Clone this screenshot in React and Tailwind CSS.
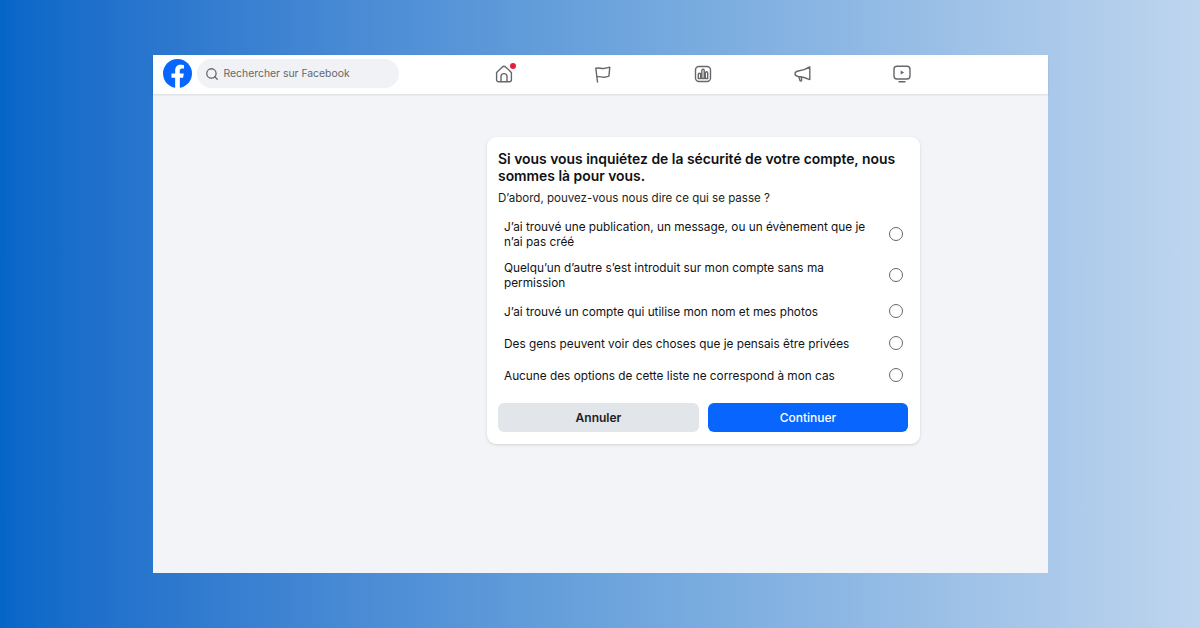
import React from "react";
import { Search } from "lucide-react";

const options = [
    { label: "J’ai trouvé une publication, un message, ou un évènement que je n’ai pas créé", tall: true },
    { label: "Quelqu’un d’autre s’est introduit sur mon compte sans ma permission", tall: true },
    { label: "J’ai trouvé un compte qui utilise mon nom et mes photos" },
    { label: "Des gens peuvent voir des choses que je pensais être privées" },
    { label: "Aucune des options de cette liste ne correspond à mon cas" },
];

const FbLogo = () => (
    <svg viewBox="0 0 36 36" className="w-[29px] h-[29px] shrink-0">
        <circle cx="18" cy="18" r="18" fill="#0866ff" />
        <path
            fill="#fff"
            d="M25 23.2l.8-5.2h-5V14.7c0-1.5.7-2.9 3-2.9h2.3V7.4s-2.1-.4-4.1-.4c-4.2 0-6.9 2.5-6.9 7.1V18h-4.600v5.200h4.600V36h5.800V23.200z"
        />
    </svg>
);

const HomeIcon = () => (
    <svg viewBox="0 0 18 18" className="w-[18px] h-[18px]" fill="none" stroke="#65676b" strokeWidth="1.4" strokeLinejoin="round">
        <path d="M1.600 7.400 7.400 2a2.300 2.300 0 0 1 3.200 0l5.800 5.400v7.400a2 2 0 0 1-2 2H3.600a2 2 0 0 1-2-2z" />
        <path d="M6 16.800V11.600a3 3 0 0 1 6 0v5.200" />
    </svg>
);

const FlagIcon = () => (
    <svg viewBox="0 0 18 18" className="w-[18px] h-[18px]" fill="none" stroke="#65676b" strokeWidth="1.4" strokeLinecap="round" strokeLinejoin="round">
        <path d="M3.500 17 1.800 3.200c3-.600 5.800.600 8 .300 2-.200 4-.600 6-1.300l-.900 9c-3 1.300-5.500 1.200-8 .7-1.500-.300-3.100-.300-4.200 0" />
    </svg>
);

const ChartIcon = () => (
    <svg viewBox="0 0 18 18" className="w-[18px] h-[18px]" fill="none" stroke="#65676b" strokeWidth="1.4" strokeLinejoin="round">
        <rect x="1.500" y="1.500" width="15" height="15" rx="3.500" />
        <path d="M4.300 13.500V9.500a1.100 1.100 0 0 1 2.400 0v4zM7.800 13.500V5.500a1.200 1.200 0 0 1 2.400 0v8zM11.300 13.500V8a1.200 1.200 0 0 1 2.400 0v5.500z" />
    </svg>
);

const MegaphoneIcon = () => (
    <svg viewBox="0 0 18 18" className="w-[18px] h-[18px]" fill="none" stroke="#65676b" strokeWidth="1.4" strokeLinejoin="round" strokeLinecap="round">
        <path d="M15.800 1.800v12.800c-3.500-1.500-7-2.600-11.500-3.100-2.200-.300-3.300-1.300-3.300-2.700S2.200 6.300 4.300 6c4.500-.600 8-2 11.500-4.200z" />
        <path d="M4.800 11.600 6 15.500c.200.800 1.800.600 1.700-.400L7.300 12" />
    </svg>
);

const VideoIcon = () => (
    <svg viewBox="0 0 18 18" className="w-[18px] h-[18px]" fill="none" stroke="#65676b" strokeWidth="1.4" strokeLinecap="round">
        <rect x="1" y="1.300" width="16" height="12.700" rx="3" />
        <path d="M6 16.800h6" />
        <path d="M7.700 5.400v4.200l3.400-2.100z" fill="#65676b" stroke="none" />
    </svg>
);

const App = () => {
    return (
        <div
            className="w-[1200px] h-[628px] overflow-hidden flex justify-center pt-[55px] pl-px bg-gradient-to-r from-[#0566c8] via-[#6ba3dc] to-[#bed5ee]"
            style={{ fontFamily: "Inter, 'Liberation Sans', sans-serif" }}
        >
            <div className="w-[895px] h-[518px] bg-[#f2f4f8] flex flex-col">
                {/* Top bar */}
                <div className="h-[39px] bg-white shadow-[0_1px_2px_rgba(0,0,0,0.1)] flex items-center pl-[9.500px] pb-[2px]">
                    <FbLogo />
                    <div className="ml-[5px] w-[202px] h-[29px] rounded-full bg-[#f0f2f5] flex items-center pl-[8px] gap-[5px]">
                        <Search className="w-[14px] h-[14px] text-[#65676b]" strokeWidth={2.2} />
                        <span className="text-[10.400px] text-[#65676b]">Rechercher sur Facebook</span>
                    </div>
                    <div className="ml-[55.500px] w-[498px] grid grid-cols-5">
                        <div className="flex justify-center">
                            <div className="relative">
                                <HomeIcon />
                                <span className="absolute -top-[2px] -right-[3px] w-[6px] h-[6px] rounded-full bg-[#e41e3f]" />
                            </div>
                        </div>
                        <div className="flex justify-center"><FlagIcon /></div>
                        <div className="flex justify-center"><ChartIcon /></div>
                        <div className="flex justify-center"><MegaphoneIcon /></div>
                        <div className="flex justify-center"><VideoIcon /></div>
                    </div>
                </div>

                {/* Card */}
                <div className="pl-[334px] pt-[43px]">
                    <div className="w-[433px] h-[307px] bg-white rounded-[9px] shadow-[0_1px_3px_rgba(0,0,0,0.14)] px-[11px] pt-[14px]">
                        <h1 className="text-[13.900px] leading-[17px] font-semibold text-[#0f1114]">
                            Si vous vous inquiétez de la sécurité de votre compte, nous sommes là pour vous.
                        </h1>
                        <p className="mt-[5px] text-[11.550px] leading-[16px] text-[#1c1e21]">
                            D’abord, pouvez-vous nous dire ce qui se passe ?
                        </p>
                        <div className="mt-[7px]">
                            {options.map((opt) => (
                                <div
                                    key={opt.label}
                                    className={`flex items-center justify-between pl-[6px] pr-[6px] ${opt.tall ? "h-[41px]" : "h-[32px]"}`}
                                >
                                    <span className="block w-[370px] pt-[2px] text-[11.800px] leading-[15px] text-[#111316]">{opt.label}</span>
                                    <span className="w-[14px] h-[14px] rounded-full border-[1.500px] border-[#65676b] shrink-0" />
                                </div>
                            ))}
                        </div>
                        <div className="mt-[12px] flex gap-[9px]">
                            <button className="w-[201px] h-[29px] rounded-[6px] bg-[#e2e5e9] text-[12px] font-semibold text-[#1c1e21]">
                                Annuler
                            </button>
                            <button className="w-[200px] h-[29px] rounded-[6px] bg-[#0866ff] text-[12px] font-medium text-white">
                                Continuer
                            </button>
                        </div>
                    </div>
                </div>
            </div>
        </div>
    );
};

export default App;
